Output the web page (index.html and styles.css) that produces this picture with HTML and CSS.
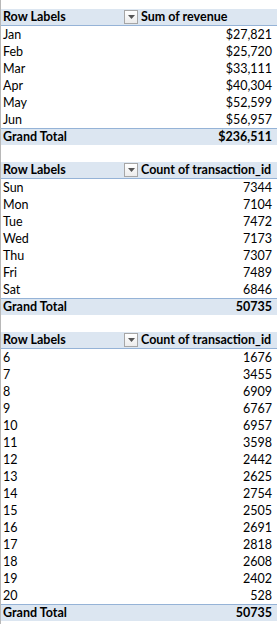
FILE: index.html
```html
<!DOCTYPE html>
<html>
<head>
<meta charset="utf-8">
<link rel="stylesheet" href="styles.css">
</head>
<body>
<div class="sheet">
  <div class="pivot">
    <div class="row head">
      <div class="c1"><span>Row Labels</span><span class="dd"><svg width="7" height="4" viewBox="0 0 7 4"><path d="M0 0H7L3.5 4Z" fill="#555"/></svg></span></div>
      <div class="c2 lbl">Sum of revenue</div>
    </div>
    <div class="row"><div class="c1">Jan</div><div class="c2">$27,821</div></div>
    <div class="row"><div class="c1">Feb</div><div class="c2">$25,720</div></div>
    <div class="row"><div class="c1">Mar</div><div class="c2">$33,111</div></div>
    <div class="row"><div class="c1">Apr</div><div class="c2">$40,304</div></div>
    <div class="row"><div class="c1">May</div><div class="c2">$52,599</div></div>
    <div class="row"><div class="c1">Jun</div><div class="c2">$56,957</div></div>
    <div class="row total"><div class="c1">Grand Total</div><div class="c2">$236,511</div></div>
  </div>
  <div class="pivot">
    <div class="row head">
      <div class="c1"><span>Row Labels</span><span class="dd"><svg width="7" height="4" viewBox="0 0 7 4"><path d="M0 0H7L3.5 4Z" fill="#555"/></svg></span></div>
      <div class="c2 lbl">Count of transaction_id</div>
    </div>
    <div class="row"><div class="c1">Sun</div><div class="c2">7344</div></div>
    <div class="row"><div class="c1">Mon</div><div class="c2">7104</div></div>
    <div class="row"><div class="c1">Tue</div><div class="c2">7472</div></div>
    <div class="row"><div class="c1">Wed</div><div class="c2">7173</div></div>
    <div class="row"><div class="c1">Thu</div><div class="c2">7307</div></div>
    <div class="row"><div class="c1">Fri</div><div class="c2">7489</div></div>
    <div class="row"><div class="c1">Sat</div><div class="c2">6846</div></div>
    <div class="row total"><div class="c1">Grand Total</div><div class="c2">50735</div></div>
  </div>
  <div class="pivot">
    <div class="row head">
      <div class="c1"><span>Row Labels</span><span class="dd"><svg width="7" height="4" viewBox="0 0 7 4"><path d="M0 0H7L3.5 4Z" fill="#555"/></svg></span></div>
      <div class="c2 lbl">Count of transaction_id</div>
    </div>
    <div class="row"><div class="c1">6</div><div class="c2">1676</div></div>
    <div class="row"><div class="c1">7</div><div class="c2">3455</div></div>
    <div class="row"><div class="c1">8</div><div class="c2">6909</div></div>
    <div class="row"><div class="c1">9</div><div class="c2">6767</div></div>
    <div class="row"><div class="c1">10</div><div class="c2">6957</div></div>
    <div class="row"><div class="c1">11</div><div class="c2">3598</div></div>
    <div class="row"><div class="c1">12</div><div class="c2">2442</div></div>
    <div class="row"><div class="c1">13</div><div class="c2">2625</div></div>
    <div class="row"><div class="c1">14</div><div class="c2">2754</div></div>
    <div class="row"><div class="c1">15</div><div class="c2">2505</div></div>
    <div class="row"><div class="c1">16</div><div class="c2">2691</div></div>
    <div class="row"><div class="c1">17</div><div class="c2">2818</div></div>
    <div class="row"><div class="c1">18</div><div class="c2">2608</div></div>
    <div class="row"><div class="c1">19</div><div class="c2">2402</div></div>
    <div class="row"><div class="c1">20</div><div class="c2">528</div></div>
    <div class="row total"><div class="c1">Grand Total</div><div class="c2">50735</div></div>
  </div>
</div>
</body>
</html>
```
FILE: styles.css
```css
html, body {
  margin: 0;
  padding: 0;
  background: #ffffff;
}
body {
  font-family: Lato, "Open Sans", sans-serif;
  font-size: 12.5px;
  color: #000;
}
.sheet {
  width: 277px;
  height: 624px;
  border-left: 1px solid #b8b8b8;
  padding-top: 9px;
  box-sizing: border-box;
  display: flex;
  flex-direction: column;
  gap: 17px;
}
.pivot {
  display: flex;
  flex-direction: column;
}
.row {
  display: flex;
  height: 17px;
  line-height: 17px;
  box-sizing: border-box;
}
.c1 {
  width: 137px;
  padding-left: 2px;
  box-sizing: border-box;
  display: flex;
  align-items: center;
  justify-content: space-between;
  white-space: nowrap;
}
.c2 {
  flex: 1;
  text-align: right;
  padding-right: 5px;
  white-space: nowrap;
}
.c2.lbl {
  text-align: left;
  padding-left: 3px;
  padding-right: 0;
}
.head {
  background: #dce6f1;
  border-bottom: 1px solid #95b3d7;
  font-weight: bold;
}
.head .c1, .head .c2 {
  height: 16px;
  line-height: 16px;
}
.total {
  background: #dce6f1;
  border-top: 1px solid #95b3d7;
  font-weight: bold;
}
.total .c1, .total .c2 {
  height: 16px;
  line-height: 16px;
}
.dd {
  width: 14px;
  height: 14px;
  box-sizing: border-box;
  border: 1px solid #a6a6a6;
  background: linear-gradient(#ffffff, #ececec);
  display: flex;
  align-items: center;
  justify-content: center;
}
```
